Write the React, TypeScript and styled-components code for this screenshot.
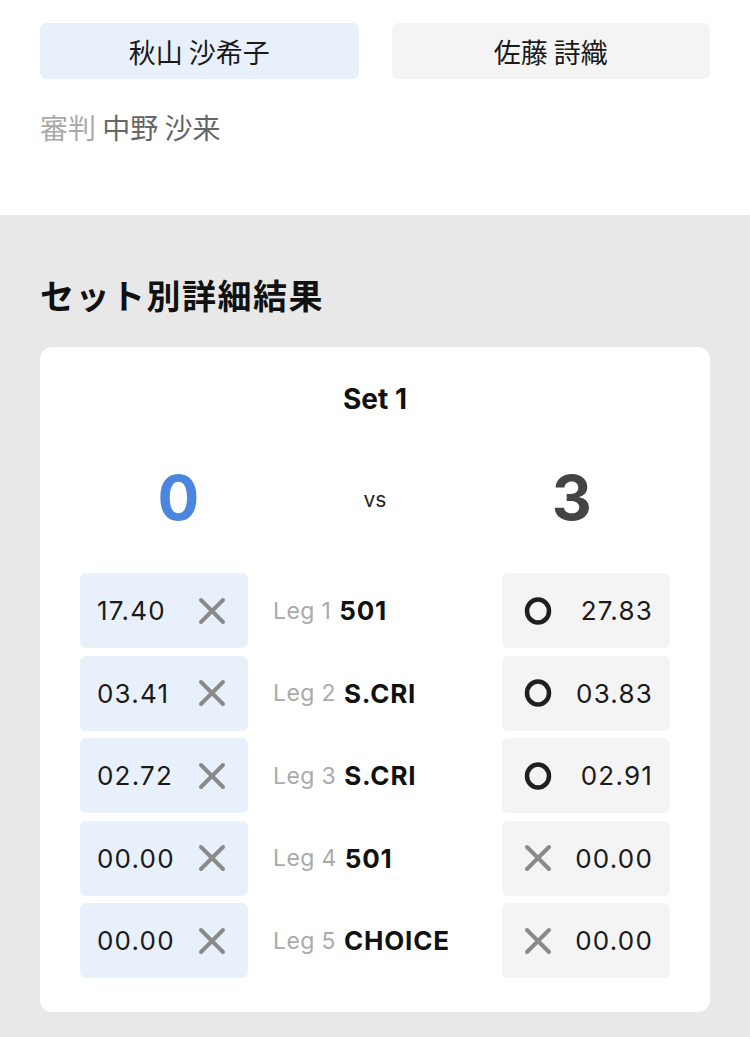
import styled, { createGlobalStyle } from 'styled-components';

const GlobalStyle = createGlobalStyle`
  html, body {
    margin: 0;
    padding: 0;
    background: #e8e8e8;
  }
  body {
    font-family: Inter, "Noto Sans CJK JP", sans-serif;
    color: #111;
  }
`;

const Page = styled.div`
  width: 750px;
  min-height: 1037px;
  background: #e8e8e8;
`;

const Header = styled.div`
  background: #fff;
  padding: 23px 40px 0;
  height: 215px;
  box-sizing: border-box;
`;

const Players = styled.div`
  display: grid;
  grid-template-columns: 1fr 1fr;
  gap: 33px;
`;

const PlayerName = styled.div<{ $home?: boolean }>`
  height: 56px;
  border-radius: 6px;
  background: ${({ $home }) => ($home ? '#e8f1fb' : '#f4f4f4')};
  display: flex;
  align-items: center;
  justify-content: center;
  font-family: "Noto Sans CJK JP", sans-serif;
  font-size: 27px;
  color: #1a1a1a;
`;

const Referee = styled.div`
  margin-top: 28px;
  font-family: "Noto Sans CJK JP", sans-serif;
  font-size: 28px;
  color: #666;
  span {
    color: #aaa;
  }
`;

const Body = styled.div`
  padding: 56px 40px 25px;
`;

const SectionTitle = styled.h2`
  margin: 0 0 28px;
  font-family: "Noto Sans CJK JP", sans-serif;
  font-size: 34px;
  font-weight: 700;
  letter-spacing: 1.5px;
  line-height: 48px;
  color: #111;
`;

const Card = styled.div`
  background: #fff;
  border-radius: 12px;
  padding: 30px 40px 34px;
`;

const SetTitle = styled.div`
  text-align: center;
  font-size: 28px;
  font-weight: 700;
  line-height: 44px;
`;

const ScoreRow = styled.div`
  display: grid;
  grid-template-columns: 1fr 1fr 1fr;
  align-items: center;
  height: 80px;
  margin: 36px 0 36px;
`;

const Score = styled.div<{ $color: string }>`
  text-align: center;
  font-size: 62px;
  font-weight: 700;
  color: ${({ $color }) => $color};
`;

const Vs = styled.div`
  text-align: center;
  font-size: 21px;
  padding-top: 4px;
  color: #222;
`;

const Legs = styled.div`
  display: flex;
  flex-direction: column;
  gap: 7.5px;
`;

const LegRow = styled.div`
  display: grid;
  grid-template-columns: 168px 1fr 168px;
  column-gap: 25px;
  height: 75px;
`;

const StatBox = styled.div<{ $home?: boolean }>`
  border-radius: 6px;
  background: ${({ $home }) => ($home ? '#e8f1fb' : '#f4f4f4')};
  display: flex;
  align-items: center;
  justify-content: space-between;
  padding: ${({ $home }) => ($home ? '0 22px 0 17px' : '0 17px 0 22px')};
`;

const Stat = styled.span`
  font-size: 26px;
  color: #1a1a1a;
  letter-spacing: 1.2px;
`;

const LegLabel = styled.div`
  display: flex;
  align-items: center;
  gap: 8px;
  font-size: 23px;
  letter-spacing: 0.4px;
  color: #aaa;
  b {
    font-size: 26px;
    font-weight: 700;
    letter-spacing: 0.8px;
    color: #111;
  }
`;

const Cross = () => (
  <svg width="28" height="28" viewBox="0 0 28 28">
    <path d="M3 3 L25 25 M25 3 L3 25" stroke="#8a8a8a" strokeWidth="4" strokeLinecap="round" />
  </svg>
);

const Circle = () => (
  <svg width="28" height="28" viewBox="0 0 28 28">
    <ellipse cx="14" cy="14" rx="11" ry="11.5" fill="none" stroke="#1f1f1f" strokeWidth="4.5" />
  </svg>
);

const legs = [
  { no: 1, game: '501', home: '17.40', away: '27.83', awayWin: true },
  { no: 2, game: 'S.CRI', home: '03.41', away: '03.83', awayWin: true },
  { no: 3, game: 'S.CRI', home: '02.72', away: '02.91', awayWin: true },
  { no: 4, game: '501', home: '00.00', away: '00.00', awayWin: false },
  { no: 5, game: 'CHOICE', home: '00.00', away: '00.00', awayWin: false },
];

export default function App() {
  return (
    <>
      <GlobalStyle />
      <Page>
        <Header>
          <Players>
            <PlayerName $home>秋山 沙希子</PlayerName>
            <PlayerName>佐藤 詩織</PlayerName>
          </Players>
          <Referee>
            <span>審判</span> 中野 沙来
          </Referee>
        </Header>
        <Body>
          <SectionTitle>セット別詳細結果</SectionTitle>
          <Card>
            <SetTitle>Set 1</SetTitle>
            <ScoreRow>
              <Score $color="#4a86e0">0</Score>
              <Vs>vs</Vs>
              <Score $color="#444">3</Score>
            </ScoreRow>
            <Legs>
              {legs.map((leg) => (
                <LegRow key={leg.no}>
                  <StatBox $home>
                    <Stat>{leg.home}</Stat>
                    <Cross />
                  </StatBox>
                  <LegLabel>
                    Leg {leg.no} <b>{leg.game}</b>
                  </LegLabel>
                  <StatBox>
                    {leg.awayWin ? <Circle /> : <Cross />}
                    <Stat>{leg.away}</Stat>
                  </StatBox>
                </LegRow>
              ))}
            </Legs>
          </Card>
        </Body>
      </Page>
    </>
  );
}
